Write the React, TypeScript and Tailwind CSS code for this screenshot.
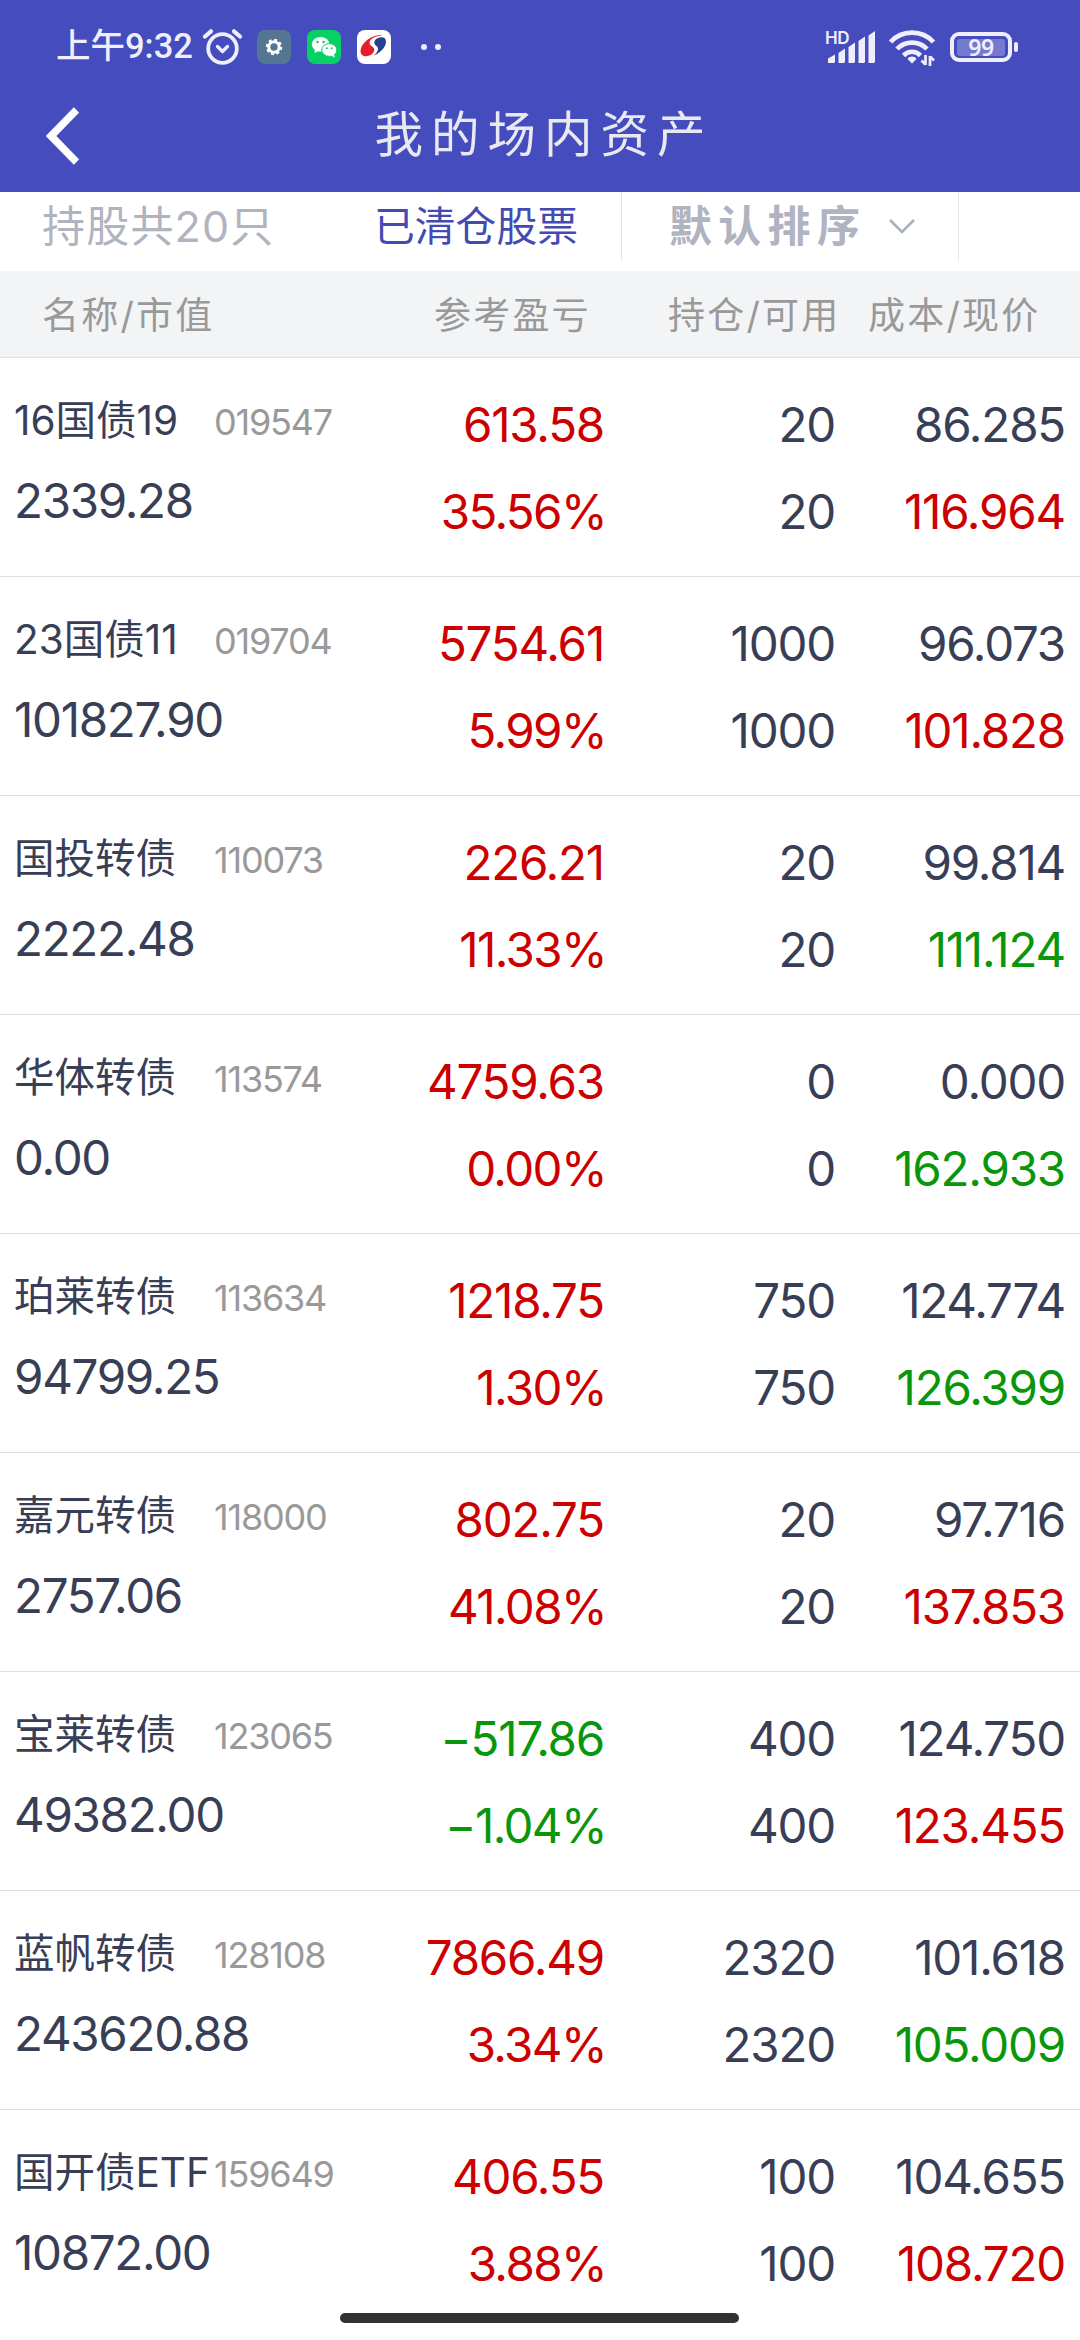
type Tone = 'up' | 'down'

interface Holding {
  name: string
  code: string
  value: string
  profit: string
  rate: string
  tone: Tone
  held: string
  usable: string
  cost: string
  price: string
  priceTone: Tone
}

const holdings: Holding[] = [
  { name: '16国债19', code: '019547', value: '2339.28', profit: '613.58', rate: '35.56%', tone: 'up', held: '20', usable: '20', cost: '86.285', price: '116.964', priceTone: 'up' },
  { name: '23国债11', code: '019704', value: '101827.90', profit: '5754.61', rate: '5.99%', tone: 'up', held: '1000', usable: '1000', cost: '96.073', price: '101.828', priceTone: 'up' },
  { name: '国投转债', code: '110073', value: '2222.48', profit: '226.21', rate: '11.33%', tone: 'up', held: '20', usable: '20', cost: '99.814', price: '111.124', priceTone: 'down' },
  { name: '华体转债', code: '113574', value: '0.00', profit: '4759.63', rate: '0.00%', tone: 'up', held: '0', usable: '0', cost: '0.000', price: '162.933', priceTone: 'down' },
  { name: '珀莱转债', code: '113634', value: '94799.25', profit: '1218.75', rate: '1.30%', tone: 'up', held: '750', usable: '750', cost: '124.774', price: '126.399', priceTone: 'down' },
  { name: '嘉元转债', code: '118000', value: '2757.06', profit: '802.75', rate: '41.08%', tone: 'up', held: '20', usable: '20', cost: '97.716', price: '137.853', priceTone: 'up' },
  { name: '宝莱转债', code: '123065', value: '49382.00', profit: '−517.86', rate: '−1.04%', tone: 'down', held: '400', usable: '400', cost: '124.750', price: '123.455', priceTone: 'up' },
  { name: '蓝帆转债', code: '128108', value: '243620.88', profit: '7866.49', rate: '3.34%', tone: 'up', held: '2320', usable: '2320', cost: '101.618', price: '105.009', priceTone: 'down' },
  { name: '国开债ETF', code: '159649', value: '10872.00', profit: '406.55', rate: '3.88%', tone: 'up', held: '100', usable: '100', cost: '104.655', price: '108.720', priceTone: 'up' },
]

const toneClass: Record<Tone, string> = {
  up: 'text-[#cc0000]',
  down: 'text-[#0a960a]',
}

function StatusBar() {
  return (
    <div className="flex h-[94px] items-center pr-[62px] pl-[56px] text-[#eeeefc]">
      <span className="w-[146px] font-[Roboto,'Noto_Sans_CJK_SC',sans-serif] text-[34.5px] font-medium whitespace-nowrap">上午9:32</span>
      <svg className="h-[38px] w-[41px]" viewBox="0 0 41 38" fill="none" stroke="currentColor" strokeLinecap="round" strokeLinejoin="round">
        <circle cx="20.5" cy="20.5" r="14.3" strokeWidth="3.8" />
        <path d="M15.5 18.5l5 5 5-5" strokeWidth="3.4" />
        <path d="M3 8.5l6-5.2M38 8.5l-6-5.2" strokeWidth="4.2" />
      </svg>
      <svg className="ml-[14px] h-[34px] w-[34px]" viewBox="0 0 34 34">
        <rect width="34" height="34" rx="8" fill="#557692" />
        <circle cx="17" cy="17" r="5.2" fill="none" stroke="#fff" strokeWidth="3" />
        <circle cx="17" cy="17" r="7.2" fill="none" stroke="#fff" strokeWidth="2" strokeDasharray="3 2.65" />
      </svg>
      <svg className="ml-4 h-[34px] w-[34px]" viewBox="0 0 34 34">
        <rect width="34" height="34" rx="8" fill="#07d064" />
        <ellipse cx="13.6" cy="14.3" rx="8.8" ry="7.4" fill="#fff" />
        <path d="M8 19l-.5 4 4-2z" fill="#fff" />
        <ellipse cx="22.3" cy="20" rx="7.6" ry="6.4" fill="#fff" stroke="#07d064" strokeWidth="1" />
        <path d="M24 25.5l3.6 2-.6-4z" fill="#fff" />
        <g fill="#07d064">
          <circle cx="10.6" cy="12" r="1.2" />
          <circle cx="16.6" cy="12" r="1.2" />
          <circle cx="19.8" cy="18.3" r="1" />
          <circle cx="24.8" cy="18.3" r="1" />
        </g>
      </svg>
      <svg className="ml-4 h-[34px] w-[34px]" viewBox="0 0 34 34">
        <rect width="34" height="34" rx="8" fill="#fff" />
        <path d="M27 6C17 2.500 4 12 3.500 21c0 6.500 8 6.500 12 2.500 3-3 2-6-1-7.500-2.500-1.500-3-5.500 1.500-8C19 6.500 23 5.500 27 6z" fill="#e81c2a" />
        <path d="M20 8.500c5-2.500 9-1 9 3 0 6-6 11.500-12 14 4.500-4 5-7.500 2.500-9.500-3-2-3-5.500.5-7.500z" fill="#24408e" />
      </svg>
      <span className="ml-[30px] h-[6px] w-[6px] rounded-full bg-current" />
      <span className="ml-2 h-[6px] w-[6px] rounded-full bg-current" />

      <svg className="ml-auto h-[38px] w-[52px]" viewBox="0 0 52 38" fill="currentColor">
        <text x="0" y="15.5" fontSize="17" fontWeight="600" fontFamily="Inter, sans-serif" letterSpacing="-0.5">HD</text>
        <path d="M3 35v-4.500l7-4V34l-1 1H3zM13.500 35V25l6.500-4.500V34l-1 1zM23.500 35V19l6.500-4.500V34l-1 1zM33.500 35V13L40 8.500V34l-1 1zM43.500 35V7.500L50 3v31l-1 1z" />
      </svg>
      <svg className="ml-[11px] h-[38px] w-[48px]" viewBox="0 0 48 38" fill="none" stroke="currentColor">
        <path d="M2.500 14C14 1.500 34 1.500 45.500 14M9 21c8-8.500 22-8.500 30 0M15.500 27.500c5-5 12-5 17 0" strokeWidth="4.700" />
        <path d="M24 28.500c2 0 4 1 4.500 2.500L24 35.500 19.500 31c.5-1.500 2.500-2.500 4.500-2.500z" fill="currentColor" stroke="none" />
        <path d="M37.500 27v10M37.500 36.500l-4-4M42 38V28M42 28.500l4 4" strokeWidth="2.700" />
      </svg>
      <div className="ml-[14px] flex h-[30px] w-[62px] items-center justify-center rounded-[9px] border-4 border-current">
        <div className="flex h-[17px] w-[48px] items-center justify-center rounded-[3px] bg-[#747ad0] font-['Noto_Sans',sans-serif] text-[23px] font-semibold tracking-[-0.5px]">99</div>
      </div>
      <span className="ml-[2px] h-[10px] w-[4px] rounded-[2px] bg-current" />
    </div>
  )
}

function TitleBar() {
  return (
    <div className="flex h-[98px] items-center justify-center pb-[15px]">
      <svg className="ml-[45px] h-[58px] w-[34px]" viewBox="0 0 34 58" fill="none" stroke="#fff" strokeWidth="7.500">
        <path d="M31.500 3L6 29l25.500 26" />
      </svg>
      <h1 className="flex-1 pr-[71px] text-center text-[48.500px] tracking-[8px] text-[#e9e9f1]">我的场内资产</h1>
    </div>
  )
}

function FilterBar() {
  return (
    <div className="flex h-[79px] text-[#b0b3c0]">
      <div className="flex h-[69px] w-[622px] items-center border-r border-[#e4e4ea] pl-[42px] whitespace-nowrap">
        <span className="w-[332px] text-[43px] tracking-[1.200px]">持股共20只</span>
        <span className="text-[40.800px] text-[#434bb3]">已清仓股票</span>
      </div>
      <div className="flex h-[69px] w-[337px] items-center border-r border-[#e4e4ea] pl-[47px]">
        <span className="text-[43px] font-bold tracking-[6.300px]">默认排序</span>
        <svg className="mb-[2px] ml-[22px] h-4 w-[28px]" viewBox="0 0 28 16" fill="none" stroke="#a7aec0" strokeWidth="2.500">
          <path d="M2 2l12 12L26 2" />
        </svg>
      </div>
    </div>
  )
}

function TableHead() {
  return (
    <div className="flex h-[87px] items-center border-b border-[#dedfe0] bg-[#f3f4f6] pt-[4px] pl-[42px] text-[37px] tracking-[2.200px] whitespace-nowrap text-[#999]">
      <span className="w-[392px]">名称/市值</span>
      <span className="w-[234px]">参考盈亏</span>
      <span className="w-[200px]">持仓/可用</span>
      <span>成本/现价</span>
    </div>
  )
}

function Pair({ top, bottom, className = '', bottomClass = '' }: { top: string; bottom: string; className?: string; bottomClass?: string }) {
  return (
    <div className={`flex flex-col pt-[23px] text-right text-[47.500px] leading-[87px] tracking-[-1.200px] ${className}`}>
      <span>{top}</span>
      <span className={bottomClass}>{bottom}</span>
    </div>
  )
}

function HoldingRow({ item }: { item: Holding }) {
  return (
    <li className="flex h-[219px] shrink-0 border-b border-[#dedede] pl-[14px] whitespace-nowrap text-[#383e56] last:border-b-0">
      <div className="w-[341px] pt-[35px]">
        <div className="flex h-[56px] items-center">
          <span className="w-[200px] text-[40.500px]">{item.name}</span>
          <span className="pt-[2px] text-[36px] tracking-[-1.200px] text-[#999]">{item.code}</span>
        </div>
        <div className="mt-[14px] text-[47.500px] leading-[76px] tracking-[-1.300px]">{item.value}</div>
      </div>
      <Pair top={item.profit} bottom={item.rate} className={`w-[249px] ${toneClass[item.tone]}`} bottomClass="mr-[-2px] tracking-[-1.600px]" />
      <Pair top={item.held} bottom={item.usable} className="w-[231px]" />
      <Pair top={item.cost} bottom={item.price} className="w-[230px]" bottomClass={toneClass[item.priceTone]} />
    </li>
  )
}

export default function App() {
  return (
    <div className="relative flex h-[2340px] w-[1080px] flex-col overflow-hidden bg-white font-[Inter,'Noto_Sans_CJK_SC',sans-serif]">
      <header className="h-[192px] shrink-0 bg-[#444cbe]">
        <StatusBar />
        <TitleBar />
      </header>
      <FilterBar />
      <TableHead />
      <ul>
        {holdings.map((h) => (
          <HoldingRow key={h.code} item={h} />
        ))}
      </ul>
      {/* system gesture bar */}
      <div className="absolute bottom-[17px] left-[340px] h-[10px] w-[399px] rounded-full bg-[#323232]" />
    </div>
  )
}
